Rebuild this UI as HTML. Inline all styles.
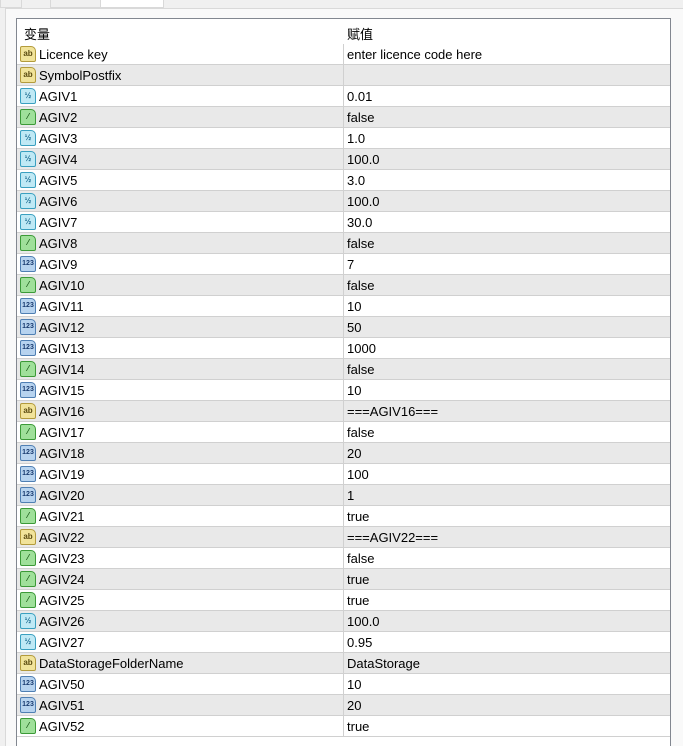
<!DOCTYPE html><html><head><style>
body{margin:0;width:683px;height:745px;background:#f0f0f0;position:relative;overflow:hidden;font-family:"Liberation Sans","Noto Sans CJK SC",sans-serif;font-size:13px;color:#000}
.tab{position:absolute;top:-6px;height:12px;border:1px solid #d9d9d9;background:#f0f0f0}
.panel{position:absolute;left:5px;top:8px;width:678px;height:737px;background:#f9f9f9;border-top:1px solid #d9d9d9;border-left:1px solid #d9d9d9}
.tbl{position:absolute;left:16px;top:18px;width:653px;height:727px;background:#fff;border:1px solid #828790;border-bottom:none}
.hd{position:absolute;left:0;top:0;width:653px;height:25px}
.hd span{position:absolute;top:5px}
.row{position:absolute;left:0;width:653px;height:20px;border-bottom:1px solid #d0d0d0}
.row.g{background:#e9e9e9}
.row .n{position:absolute;left:22px;top:3px}
.row .v{position:absolute;left:330px;top:3px}
.row .d{position:absolute;left:326px;top:0;width:1px;height:21px;background:#d0d0d0}
.ic{position:absolute;left:3px;top:2px;width:14px;height:14px;border:1px solid;border-radius:2px 5px 2px 2px;font-size:8px;font-weight:bold;line-height:14px;text-align:center}
.ab{background:#f1e39a;border-color:#b39b3c;color:#5a4a10}
.hf{background:#bfe9f5;border-color:#3aa0c0;color:#1a6a90}
.bo{background:#9fe09a;border-color:#3c9a38;color:#1a5a18}
.nu{background:#b7d3ef;border-color:#4f7fb3;color:#1a3c70;font-size:7px}
</style></head><body>
<div class="tab" style="left:0;width:20px"></div>
<div class="tab" style="left:50px;width:50px"></div>
<div class="tab" style="left:100px;width:62px;background:#fff"></div>
<div class="panel"></div>
<div class="tbl">
<div class="hd"><span style="left:7px">变量</span><span style="left:330px">赋值</span></div>
<div id="rows"></div>
</div>
<script>
var d=[["ab","Licence key","enter licence code here"],["ab","SymbolPostfix",""],["hf","AGIV1","0.01"],["bo","AGIV2","false"],["hf","AGIV3","1.0"],["hf","AGIV4","100.0"],["hf","AGIV5","3.0"],["hf","AGIV6","100.0"],["hf","AGIV7","30.0"],["bo","AGIV8","false"],["nu","AGIV9","7"],["bo","AGIV10","false"],["nu","AGIV11","10"],["nu","AGIV12","50"],["nu","AGIV13","1000"],["bo","AGIV14","false"],["nu","AGIV15","10"],["ab","AGIV16","===AGIV16==="],["bo","AGIV17","false"],["nu","AGIV18","20"],["nu","AGIV19","100"],["nu","AGIV20","1"],["bo","AGIV21","true"],["ab","AGIV22","===AGIV22==="],["bo","AGIV23","false"],["bo","AGIV24","true"],["bo","AGIV25","true"],["hf","AGIV26","100.0"],["hf","AGIV27","0.95"],["ab","DataStorageFolderName","DataStorage"],["nu","AGIV50","10"],["nu","AGIV51","20"],["bo","AGIV52","true"]];
var t={ab:"ab",hf:"½",bo:"⁄",nu:"123"},h="";
d.forEach(function(r,i){h+='<div class="row'+(i%2?' g':'')+'" style="top:'+(25+21*i)+'px"><div class="ic '+r[0]+'">'+t[r[0]]+'</div><span class="n">'+r[1]+'</span><div class="d"></div><span class="v">'+r[2]+'</span></div>';});
document.getElementById("rows").innerHTML=h;
</script>
</body></html>
